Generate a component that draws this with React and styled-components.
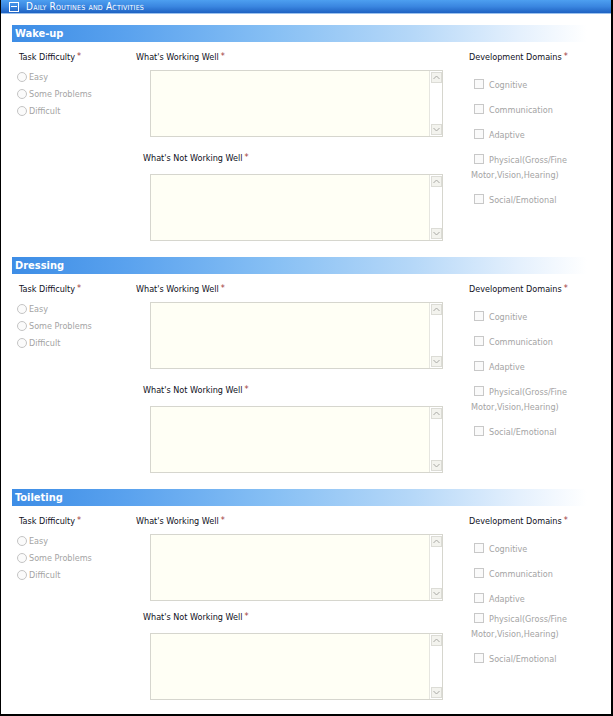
import React from "react";
import styled, { createGlobalStyle } from "styled-components";

const Global = createGlobalStyle`
  html, body { margin: 0; padding: 0; background: #fff; }
  body { font-family: "DejaVu Sans Condensed", "DejaVu Sans", sans-serif; }
  * { box-sizing: border-box; }
`;

const Frame = styled.div`
  width: 613px;
  height: 716px;
  border-left: 1px solid #000;
  border-right: 2px solid #000;
  border-bottom: 2px solid #000;
  overflow: hidden;
  background: #fff;
`;

const TopBar = styled.div`
  height: 14px;
  background: linear-gradient(#4d9ff0 0%, #3a86e0 50%, #1f62c2 100%);
  border-bottom: 1px solid #9cc2ee;
  display: flex;
  align-items: center;
  padding-left: 8px;
  gap: 7px;
`;

const ToggleIcon = styled.span`
  width: 10px;
  height: 10px;
  border: 1px solid #fff;
  display: flex;
  align-items: center;
  justify-content: center;
  &::after {
    content: "";
    width: 6px;
    height: 1px;
    background: #fff;
  }
`;

const Title = styled.span`
  color: #fff;
  font-size: 10px;
  font-variant: small-caps;
  letter-spacing: 0.2px;
  line-height: 12px;
`;

const Sections = styled.div`
  padding-top: 11px;
`;

const Section = styled.section`
  height: 232px;
`;

const SectionBar = styled.div`
  margin-left: 11px;
  width: 575px;
  height: 17px;
  padding-left: 3px;
  background: linear-gradient(
    90deg,
    #3d8de6 0%,
    #5aa2ee 20%,
    #86bff4 45%,
    #b6d8f8 70%,
    #e4f0fd 88%,
    #ffffff 100%
  );
  color: #fff;
  font-weight: bold;
  font-size: 11px;
  line-height: 17px;
`;

const Body = styled.div`
  display: flex;
  padding-left: 18px;
  padding-top: 9px;
`;

const Col = styled.div`
  width: ${(p) => p.$w}px;
  display: flex;
  flex-direction: column;
`;

const Label = styled.div`
  font-size: 9px;
  line-height: 12px;
  color: #10101c;
  margin-left: ${(p) => p.$ml || 0}px;
  margin-top: ${(p) => p.$mt || 0}px;
  white-space: nowrap;
`;

const Req = styled.span`
  color: #a03a3a;
  font-size: 9px;
  position: relative;
  top: -1px;
  margin-left: 2px;
`;

const RadioList = styled.div`
  margin-top: 8px;
  margin-left: -2px;
  display: flex;
  flex-direction: column;
  gap: 5px;
`;

const RadioRow = styled.label`
  display: flex;
  align-items: center;
  height: 12px;
  gap: 2px;
  color: #a4a4a4;
  font-size: 9px;
`;

const RadioDot = styled.span`
  width: 10px;
  height: 10px;
  border-radius: 50%;
  border: 1px solid #c4c4c4;
  background: #fbfbfb;
`;

const TextBox = styled.div`
  margin-left: ${(p) => p.$ml}px;
  margin-top: ${(p) => p.$mt}px;
  width: 293px;
  height: 67px;
  border: 1px solid #d6d6ce;
  display: flex;
  background: #fffff5;
`;

const Area = styled.textarea`
  flex: 1;
  border: none;
  background: #fffff5;
  resize: none;
  outline: none;
  margin: 0;
  padding: 2px;
  font: inherit;
`;

const ScrollCol = styled.div`
  width: 13px;
  background: #fff;
  border-left: 1px solid #e6e6e0;
  display: flex;
  flex-direction: column;
  justify-content: space-between;
  padding: 1px 1px;
`;

const ScrollBtn = styled.span`
  width: 11px;
  height: 11px;
  border: 1px solid #dcdcd6;
  background: #f3f3ee;
  display: flex;
  align-items: center;
  justify-content: center;
`;

const CheckList = styled.div`
  margin-top: 15px;
  display: flex;
  flex-direction: column;
  gap: 10px;
  width: 112px;
  padding-left: 2px;
`;

const CheckItem = styled.div`
  font-size: 9px;
  line-height: 15px;
  color: #a4a4a4;
  margin-top: ${(p) => p.$pull || 0}px;
`;

const CheckBox = styled.span`
  display: inline-block;
  width: 10px;
  height: 10px;
  border: 1px solid #c8c8c8;
  background: #fafafa;
  margin-left: 3px;
  margin-right: 5px;
  vertical-align: -1px;
`;

const Arrow = ({ up }) => (
  <svg width="7" height="5" viewBox="0 0 7 5">
    <path
      d={up ? "M0.5 4 L3.5 1 L6.5 4" : "M0.5 1 L3.5 4 L6.5 1"}
      fill="none"
      stroke="#a8a8a4"
      strokeWidth="1"
    />
  </svg>
);

const Text = ({ ml, mt }) => (
  <TextBox $ml={ml} $mt={mt}>
    <Area />
    <ScrollCol>
      <ScrollBtn>
        <Arrow up />
      </ScrollBtn>
      <ScrollBtn>
        <Arrow />
      </ScrollBtn>
    </ScrollCol>
  </TextBox>
);

const domains = [
  "Cognitive",
  "Communication",
  "Adaptive",
  "Physical(Gross/Fine Motor,Vision,Hearing)",
  "Social/Emotional",
];

const RoutineSection = ({ name, tight }) => (
  <Section>
    <SectionBar>{name}</SectionBar>
    <Body>
      <Col $w={117}>
        <Label>
          Task Difficulty<Req>*</Req>
        </Label>
        <RadioList>
          {["Easy", "Some Problems", "Difficult"].map((o) => (
            <RadioRow key={o}>
              <RadioDot />
              {o}
            </RadioRow>
          ))}
        </RadioList>
      </Col>
      <Col $w={333}>
        <Label>
          What's Working Well<Req>*</Req>
        </Label>
        <Text ml={14} mt={7} />
        <Label $ml={7} $mt={tight ? 10 : 15}>
          What's Not Working Well<Req>*</Req>
        </Label>
        <Text ml={14} mt={10} />
      </Col>
      <Col $w={130}>
        <Label>
          Development Domains<Req>*</Req>
        </Label>
        <CheckList>
          {domains.map((d, i) => (
            <CheckItem key={d} $pull={tight && i === 3 ? -5 : 0}>
              <CheckBox />
              {d}
            </CheckItem>
          ))}
        </CheckList>
      </Col>
    </Body>
  </Section>
);

export default function App() {
  return (
    <>
      <Global />
      <Frame>
        <TopBar>
          <ToggleIcon />
          <Title>Daily Routines and Activities</Title>
        </TopBar>
        <Sections>
          <RoutineSection name="Wake-up" />
          <RoutineSection name="Dressing" />
          <RoutineSection name="Toileting" tight />
        </Sections>
      </Frame>
    </>
  );
}
